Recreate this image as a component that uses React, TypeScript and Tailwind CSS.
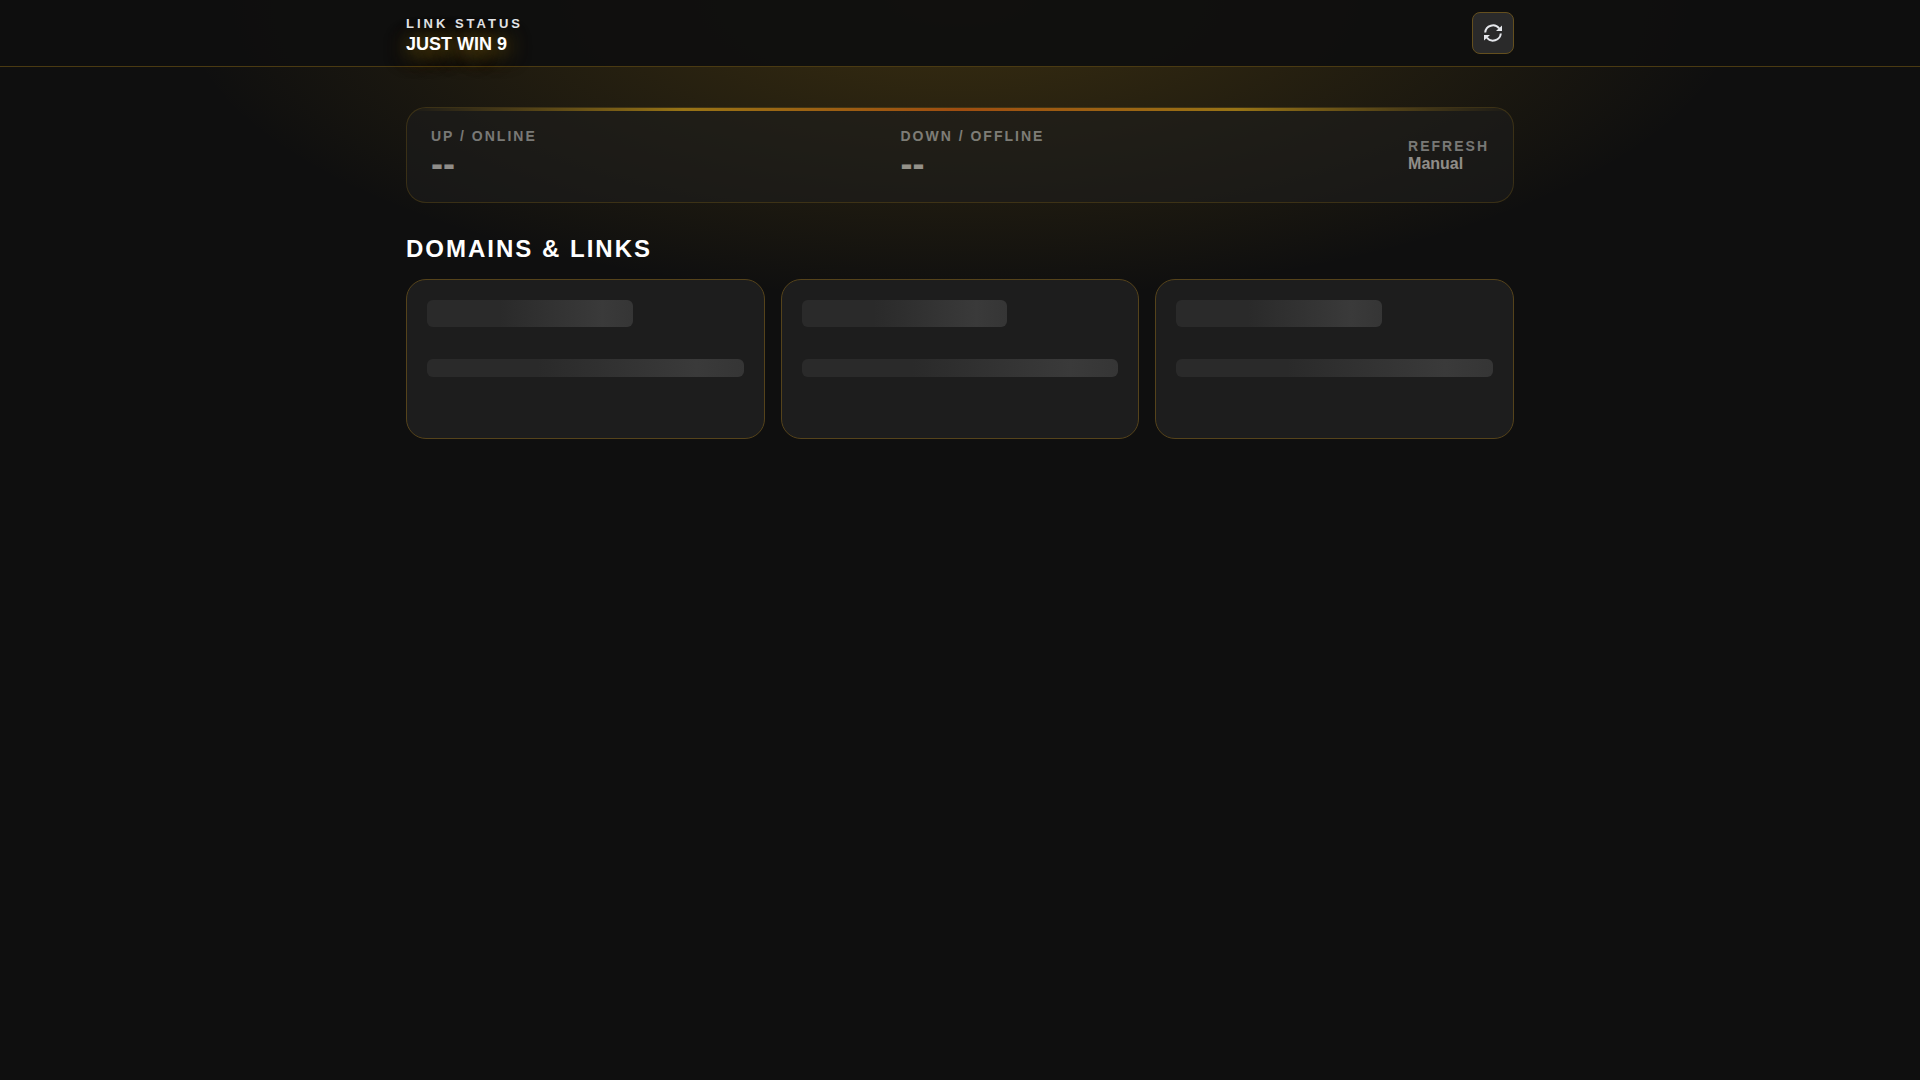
import React from 'react';

interface StatProps {
  label: string;
  value: string;
}

const Stat: React.FC<StatProps> = ({ label, value }) => (
  <div>
    <div className="text-sm leading-[18px] font-bold tracking-[2px] uppercase text-[#b8baba]">{label}</div>
    <div className="text-4xl leading-[38px] font-bold text-[#e0deda]">{value}</div>
  </div>
);

const SkeletonCard: React.FC = () => (
  <div className="h-40 rounded-[20px] border border-[#55431b] bg-[#1d1d1d] p-5">
    <div className="h-[27px] w-[65%] rounded-md bg-[linear-gradient(90deg,#2a2a2a_25%,#3a3a3a_50%,#2a2a2a_75%)] bg-[length:200%_100%] bg-[position:15%_0]"></div>
    <div className="mt-8 h-[18px] rounded-md bg-[linear-gradient(90deg,#2a2a2a_25%,#3a3a3a_50%,#2a2a2a_75%)] bg-[length:200%_100%] bg-[position:15%_0]"></div>
  </div>
);

const RefreshIcon: React.FC = () => (
  <svg className="h-[18px] w-[18px]" viewBox="0 0 18 18" fill="none" stroke="currentColor" strokeWidth="2">
    <path d="M1.200 8.500a7.800 7.800 0 0 1 14-4" />
    <path d="M16.800 9.500a7.800 7.800 0 0 1-14 4" />
    <path d="M18 1.500v5.500h-6z" fill="currentColor" stroke="none" />
    <path d="M0 16.500v-5.500h6z" fill="currentColor" stroke="none" />
  </svg>
);

export default function App() {
  return (
    <div className="min-h-screen bg-[#0f0f0f] bg-[radial-gradient(ellipse_784px_300px_at_50%_0,rgba(212,160,23,0.22),transparent)] bg-no-repeat font-['Liberation_Sans',Arial,sans-serif] text-white">
      <header className="border-b border-[#4a3a12] bg-[#0f0f0f]/95">
        <div className="mx-auto flex max-w-[1140px] items-center justify-between px-4 py-3">
          <div className="pt-0.5">
            <div className="text-[13px] leading-5 font-bold tracking-[3px] text-gray-200">LINK STATUS</div>
            <h1 className="text-lg leading-5 font-bold [text-shadow:0_2px_20px_rgba(212,160,23,0.5),0_4px_24px_rgba(212,160,23,0.5)]">JUST WIN 9</h1>
          </div>
          <button
            aria-label="Refresh"
            className="flex h-[42px] w-[42px] items-center justify-center rounded-lg border border-[#644f1e] bg-[#2a2a2a] text-gray-200"
          >
            <RefreshIcon />
          </button>
        </div>
      </header>

      <main className="mx-auto max-w-[1140px] px-4 pt-10">
        <section className="relative flex h-24 items-center justify-between overflow-hidden rounded-[20px] border border-[#d4a017]/30 bg-[#1d1d1d] px-6 opacity-60">
          <div className="absolute inset-x-0 top-0 h-[3px] bg-[linear-gradient(90deg,transparent,#e5ad1a_25%,#ee6a10_50%,#e5ad1a_75%,transparent)]"></div>
          <Stat label="Up / Online" value="--" />
          <Stat label="Down / Offline" value="--" />
          <div>
            <div className="text-sm leading-[18px] font-bold tracking-[2px] text-[#b8baba]">REFRESH</div>
            <div className="text-base leading-[18px] font-bold text-[#e0deda]">Manual</div>
          </div>
        </section>

        <h2 className="mt-8 text-2xl leading-7 font-bold tracking-[2px]">DOMAINS &amp; LINKS</h2>
        <div className="mt-4 grid grid-cols-3 gap-4">
          <SkeletonCard />
          <SkeletonCard />
          <SkeletonCard />
        </div>
      </main>
    </div>
  );
}
